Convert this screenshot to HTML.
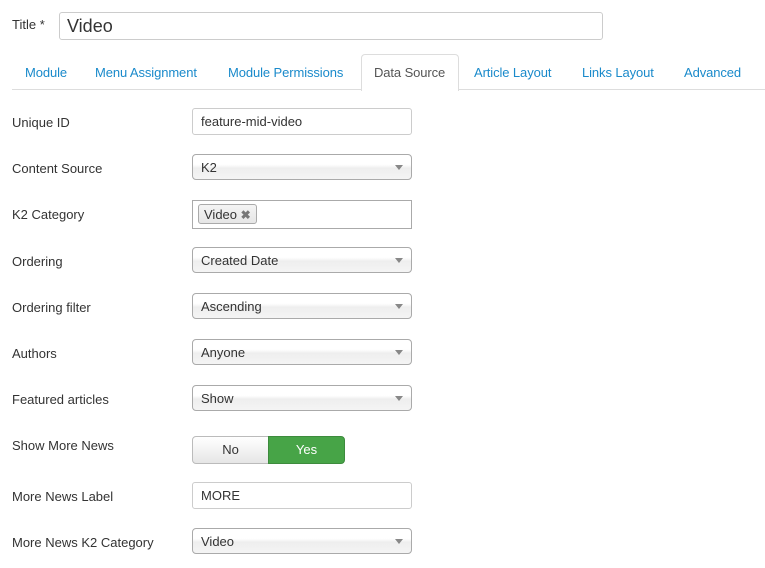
<!DOCTYPE html>
<html><head><style>
body{margin:0;width:765px;height:568px;background:#fff;font-family:"Liberation Sans",Arial,sans-serif;font-size:13px;color:#333;position:relative;overflow:hidden}
.a{position:absolute}
.lbl{position:absolute;left:12px;font-size:13px;color:#333}
.inp{position:absolute;left:192px;width:218px;height:25px;border:1px solid #ccc;border-radius:3px;background:#fff;box-sizing:content-box;line-height:26px;padding:0;}
.inp span{margin-left:8px;font-size:13px}
.sel{position:absolute;left:192px;width:218px;height:24px;border:1px solid #aaa;border-radius:4px;background:linear-gradient(#fff 0%,#fff 40%,#eee 55%,#f4f4f4 100%);line-height:26px}
.sel span{margin-left:8px}
.sel:after{content:"";position:absolute;right:8px;top:10px;border-left:4px solid transparent;border-right:4px solid transparent;border-top:5px solid #888}
.tab{position:absolute;top:65px;color:#1a8acb;font-size:13px;letter-spacing:-0.1px}
</style></head><body>
<div class="lbl" style="top:17px">Title *</div>
<div class="a" style="left:59px;top:12px;width:542px;height:26px;border:1px solid #ccc;border-radius:3px;"><span style="position:absolute;left:7px;top:3px;font-size:18px;color:#333">Video</span></div>
<div class="a" style="left:12px;top:89px;width:753px;height:1px;background:#ddd"></div>
<div class="a" style="left:361px;top:54px;width:96px;height:36px;border:1px solid #ddd;border-bottom:none;border-radius:4px 4px 0 0;background:#fff"></div>
<div class="tab" style="left:25px">Module</div>
<div class="tab" style="left:95px">Menu Assignment</div>
<div class="tab" style="left:228px">Module Permissions</div>
<div class="tab" style="left:374px;color:#555">Data Source</div>
<div class="tab" style="left:474px">Article Layout</div>
<div class="tab" style="left:582px">Links Layout</div>
<div class="tab" style="left:684px">Advanced</div>

<div class="lbl" style="top:115px">Unique ID</div>
<div class="inp" style="top:108px"><span>feature-mid-video</span></div>
<div class="lbl" style="top:161px">Content Source</div>
<div class="sel" style="top:154px"><span>K2</span></div>
<div class="lbl" style="top:207px">K2 Category</div>
<div class="a" style="left:192px;top:200px;width:218px;height:27px;border:1px solid #aaa;background:#fff"></div>
<div class="a" style="left:198px;top:204px;height:18px;line-height:19px;padding:0 5px;border:1px solid #aaa;border-radius:3px;background:linear-gradient(#f4f4f4,#e6e6e6)">Video <b style="color:#777;font-size:12px">✖</b></div>
<div class="lbl" style="top:254px">Ordering</div>
<div class="sel" style="top:247px"><span>Created Date</span></div>
<div class="lbl" style="top:300px">Ordering filter</div>
<div class="sel" style="top:293px"><span>Ascending</span></div>
<div class="lbl" style="top:346px">Authors</div>
<div class="sel" style="top:339px"><span>Anyone</span></div>
<div class="lbl" style="top:392px">Featured articles</div>
<div class="sel" style="top:385px"><span>Show</span></div>
<div class="lbl" style="top:438px">Show More News</div>
<div class="a" style="left:192px;top:436px;width:75px;height:26px;border:1px solid #bbb;border-radius:4px 0 0 4px;background:linear-gradient(#fff,#e6e6e6);text-align:center;line-height:26px">No</div>
<div class="a" style="left:268px;top:436px;width:75px;height:26px;border:1px solid #3d8b3d;border-radius:0 4px 4px 0;background:#47a447;color:#fff;text-align:center;line-height:26px">Yes</div>
<div class="lbl" style="top:489px">More News Label</div>
<div class="inp" style="top:482px"><span>MORE</span></div>
<div class="lbl" style="top:535px">More News K2 Category</div>
<div class="sel" style="top:528px"><span>Video</span></div>
</body></html>
